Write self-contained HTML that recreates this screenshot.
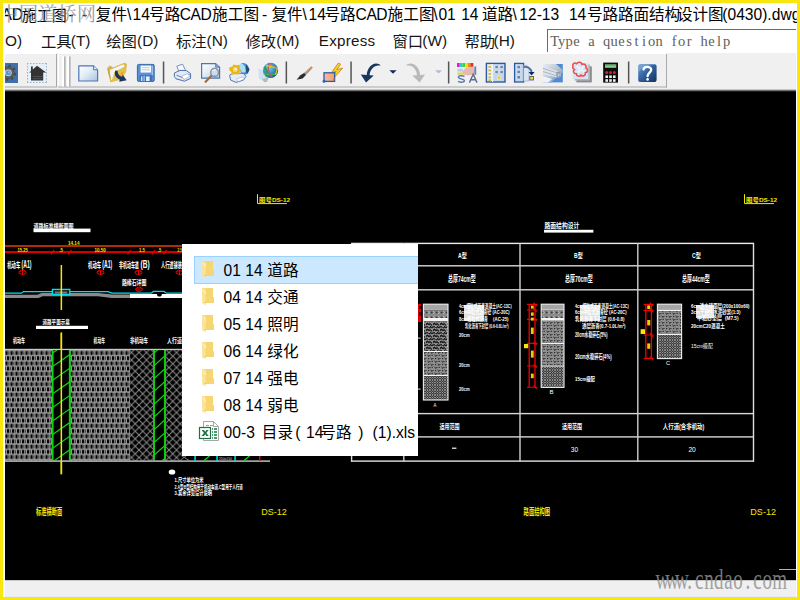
<!DOCTYPE html>
<html><head><meta charset="utf-8"><title>CAD</title>
<style>
html,body{margin:0;padding:0}
body{width:800px;height:600px;overflow:hidden;position:relative;background:#F8E60E;font-family:"Liberation Sans","Noto Sans CJK SC",sans-serif;}
.abs{position:absolute}
.t{position:absolute;white-space:pre;font-size:15.6px;line-height:20px;height:20px;color:#000}
svg{position:absolute;overflow:visible}
svg text{font-family:"Liberation Sans","Noto Sans CJK SC",sans-serif;}
</style></head><body>

<div class="abs" style="left:3px;top:3px;width:794px;height:594px;background:#fff;"></div>
<div class="abs" style="left:5px;top:3px;width:792px;height:26px;overflow:hidden;background:#fff">
<span class="t" style="left:-3.6px;top:1.59px;font-size:15.6px;color:#000;">AD</span>
<span class="t" style="left:16.8px;top:2.6px;font-size:15px;color:#000;">施工图</span>
<span class="t" style="left:63.5px;top:1.59px;font-size:15.6px;color:#000;">-</span>
<span class="t" style="left:77px;top:1.59px;font-size:15.6px;color:#000;">-</span>
<span class="t" style="left:90.8px;top:2.4px;font-size:15.6px;color:#000;">复件</span>
<span class="t" style="left:122px;top:1.59px;font-size:15.6px;color:#000;">\</span>
<span class="t" style="left:127.6px;top:1.59px;font-size:15.6px;color:#000;">14</span>
<span class="t" style="left:144.1px;top:2.4px;font-size:15.6px;color:#000;">号路</span>
<span class="t" style="left:174.8px;top:1.59px;font-size:15.6px;color:#000;letter-spacing:-0.45px">CAD</span>
<span class="t" style="left:207px;top:2.4px;font-size:15.6px;color:#000;letter-spacing:0.2px">施工图</span>
<span class="t" style="left:256.9px;top:1.59px;font-size:15.6px;color:#000;">-</span>
<span class="t" style="left:266.4px;top:2.4px;font-size:15.6px;color:#000;">复件</span>
<span class="t" style="left:297.6px;top:1.59px;font-size:15.6px;color:#000;">\</span>
<span class="t" style="left:303.5px;top:1.59px;font-size:15.6px;color:#000;">14</span>
<span class="t" style="left:319.5px;top:2.4px;font-size:15.6px;color:#000;">号路</span>
<span class="t" style="left:350.6px;top:1.59px;font-size:15.6px;color:#000;letter-spacing:-0.45px">CAD</span>
<span class="t" style="left:382.5px;top:2.4px;font-size:15.6px;color:#000;letter-spacing:0.1px">施工图</span>
<span class="t" style="left:428.2px;top:1.59px;font-size:15.6px;color:#000;">\</span>
<span class="t" style="left:433.4px;top:1.59px;font-size:15.6px;color:#000;">01</span>
<span class="t" style="left:456.2px;top:1.59px;font-size:15.6px;color:#000;">14</span>
<span class="t" style="left:477px;top:2.4px;font-size:15.6px;color:#000;">道路</span>
<span class="t" style="left:507.4px;top:1.59px;font-size:15.6px;color:#000;">\</span>
<span class="t" style="left:514.3px;top:1.59px;font-size:15.6px;color:#000;">12-13</span>
<span class="t" style="left:563.9px;top:1.59px;font-size:15.6px;color:#000;">14</span>
<span class="t" style="left:582px;top:2.4px;font-size:15.6px;color:#000;letter-spacing:-0.1px">号路路面结构</span>
<span class="t" style="left:671.9px;top:2.4px;font-size:15.6px;color:#000;">设计图</span>
<span class="t" style="left:717.3px;top:1.59px;font-size:15.6px;color:#000;">(0430).dwg</span>
<span class="t" style="left:-5.5px;top:1.8px;font-size:19px;letter-spacing:0.4px;color:#8c8c8c;opacity:0.85;font-family:'Liberation Serif','Noto Serif CJK SC',serif;">中国道桥网</span>
</div>
<div class="abs" style="left:3px;top:29px;width:794px;height:24px;background:#fff;"></div>
<div class="abs" style="left:5px;top:29px;width:540px;height:24px;overflow:hidden"><div class="abs" style="left:-5px;top:-29px">
<span class="t" style="left:-0.2px;top:30.66px;font-size:15.4px;color:#151515;">(O)</span>
<span class="t" style="left:41px;top:31.5px;font-size:15.3px;color:#151515;">工具</span>
<span class="t" style="left:70.8px;top:30.66px;font-size:15.4px;color:#151515;">(T)</span>
<span class="t" style="left:106.3px;top:31.5px;font-size:15.3px;color:#151515;">绘图</span>
<span class="t" style="left:137px;top:30.66px;font-size:15.4px;color:#151515;">(D)</span>
<span class="t" style="left:175.9px;top:31.5px;font-size:15.3px;color:#151515;">标注</span>
<span class="t" style="left:206.6px;top:30.66px;font-size:15.4px;color:#151515;">(N)</span>
<span class="t" style="left:245.5px;top:31.5px;font-size:15.3px;color:#151515;">修改</span>
<span class="t" style="left:276.3px;top:30.66px;font-size:15.4px;color:#151515;">(M)</span>
<span class="t" style="left:318.8px;top:30.73px;font-size:15.2px;color:#151515;letter-spacing:0.25px">Express</span>
<span class="t" style="left:392.5px;top:31.5px;font-size:15.3px;color:#151515;">窗口</span>
<span class="t" style="left:422.3px;top:30.66px;font-size:15.4px;color:#151515;">(W)</span>
<span class="t" style="left:464.5px;top:31.5px;font-size:15.3px;color:#151515;">帮助</span>
<span class="t" style="left:493.5px;top:30.66px;font-size:15.4px;color:#151515;">(H)</span>
</div></div>
<div class="abs" style="left:547px;top:29px;width:250px;height:23px;box-sizing:border-box;background:#fff;border-top:1px solid #6b6b6b;border-left:1px solid #6b6b6b"></div>
<div class="abs" style="left:550.3px;top:31px;height:20px;line-height:20px;white-space:nowrap;font-family:'Liberation Serif',serif;font-size:14.5px;color:#606060"><span style="display:inline-block;width:7.5px;text-align:center">T</span><span style="display:inline-block;width:7.5px;text-align:center">y</span><span style="display:inline-block;width:7.5px;text-align:center">p</span><span style="display:inline-block;width:7.5px;text-align:center">e</span><span style="display:inline-block;width:7.5px;text-align:center">&nbsp;</span><span style="display:inline-block;width:7.5px;text-align:center">a</span><span style="display:inline-block;width:7.5px;text-align:center">&nbsp;</span><span style="display:inline-block;width:7.5px;text-align:center">q</span><span style="display:inline-block;width:7.5px;text-align:center">u</span><span style="display:inline-block;width:7.5px;text-align:center">e</span><span style="display:inline-block;width:7.5px;text-align:center">s</span><span style="display:inline-block;width:7.5px;text-align:center">t</span><span style="display:inline-block;width:7.5px;text-align:center">i</span><span style="display:inline-block;width:7.5px;text-align:center">o</span><span style="display:inline-block;width:7.5px;text-align:center">n</span><span style="display:inline-block;width:7.5px;text-align:center">&nbsp;</span><span style="display:inline-block;width:7.5px;text-align:center">f</span><span style="display:inline-block;width:7.5px;text-align:center">o</span><span style="display:inline-block;width:7.5px;text-align:center">r</span><span style="display:inline-block;width:7.5px;text-align:center">&nbsp;</span><span style="display:inline-block;width:7.5px;text-align:center">h</span><span style="display:inline-block;width:7.5px;text-align:center">e</span><span style="display:inline-block;width:7.5px;text-align:center">l</span><span style="display:inline-block;width:7.5px;text-align:center">p</span></div>
<div class="abs" style="left:5px;top:53px;width:791px;height:35px;background:#f0f0f0;"></div>
<svg style="left:5px;top:52px" width="791" height="39" viewBox="5 52 791 39">
<defs>
<linearGradient id="gdoc" x1="0" y1="0" x2="1" y2="1"><stop offset="0" stop-color="#ffffff"/><stop offset="0.45" stop-color="#e4edf6"/><stop offset="1" stop-color="#a9c2de"/></linearGradient>
<linearGradient id="ghelp" x1="0" y1="0" x2="1" y2="1"><stop offset="0" stop-color="#6b9bd1"/><stop offset="0.5" stop-color="#2f5f9c"/><stop offset="1" stop-color="#14335f"/></linearGradient>
<linearGradient id="gblk" x1="0" y1="0" x2="1" y2="0"><stop offset="0" stop-color="#f7b6b6"/><stop offset="1" stop-color="#f3a35a"/></linearGradient>
<radialGradient id="gglobe" cx="0.4" cy="0.35" r="0.7"><stop offset="0" stop-color="#7fd0f0"/><stop offset="0.6" stop-color="#2a8ab8"/><stop offset="1" stop-color="#1a5a7a"/></radialGradient>
<linearGradient id="gpal" x1="0" y1="0" x2="1" y2="1"><stop offset="0" stop-color="#e8eef4"/><stop offset="0.5" stop-color="#b8c4d0"/><stop offset="1" stop-color="#4a86d0"/></linearGradient>
</defs>
<path d="M5,53.5 H56" stroke="#fff" stroke-width="1"/>
<path d="M56.5,54 V87" stroke="#a8a8a8" stroke-width="1"/>
<path d="M5,87 H57" stroke="#a8a8a8" stroke-width="1"/>
<path d="M58.5,54 V87 M58,53.5 H666" stroke="#fff" stroke-width="1"/>
<path d="M666.5,54 V87.5" stroke="#a8a8a8" stroke-width="1"/>
<path d="M58,87 H667" stroke="#a8a8a8" stroke-width="1"/>
<rect x="62" y="56.5" width="2" height="30" fill="#fff"/><rect x="64" y="56.5" width="1.6" height="30" fill="#b4b4b4"/>
<rect x="67" y="56.5" width="2" height="30" fill="#fff"/><rect x="69" y="56.5" width="1.6" height="30" fill="#b4b4b4"/>
<rect x="162.8" y="61.5" width="1.5" height="22" fill="#555"/>
<rect x="285.6" y="61.5" width="1.5" height="22" fill="#555"/>
<rect x="350.3" y="61.5" width="1.5" height="22" fill="#555"/>
<rect x="447.90000000000003" y="61.5" width="1.5" height="22" fill="#555"/>
<rect x="627.9" y="61.5" width="1.5" height="22" fill="#555"/>
<rect x="5" y="63" width="13" height="20" fill="#3f70aa"/>
<g transform="translate(8.3,72.8)">
<polygon points="8.18,0.63 7.79,2.55 5.35,2.71 4.55,3.91 5.34,6.22 3.71,7.31 1.87,5.70 0.46,5.98 -0.63,8.18 -2.55,7.79 -2.71,5.35 -3.91,4.55 -6.22,5.34 -7.31,3.71 -5.70,1.87 -5.98,0.46 -8.18,-0.63 -7.79,-2.55 -5.35,-2.71 -4.55,-3.91 -5.34,-6.22 -3.71,-7.31 -1.87,-5.70 -0.46,-5.98 0.63,-8.18 2.55,-7.79 2.71,-5.35 3.91,-4.55 6.22,-5.34 7.31,-3.71 5.70,-1.87 5.98,-0.46" fill="#4a4a4a"/>
<circle r="5.8" fill="#5a5a5a"/><circle r="3.4" fill="#cfd8e4"/><circle r="2.6" fill="#5b94d6"/><circle cx="0.6" cy="-0.4" r="0.8" fill="#9cc4f0"/>
</g>
<rect x="27" y="63" width="20" height="20" fill="#e6eef6"/>
<path d="M27.5,63 V83 M46.5,63 V83 M27,63.5 H47 M27,82.5 H47" stroke="#9fb4c8" stroke-width="1" stroke-dasharray="1.5,1.5"/>
<path d="M31,66.6 H32.8 V69.6 L37,65.8 L46.2,72.6 H43.2 V80.4 H31 V72.6 H29.2 L31,70.9 Z" fill="#333"/>
<path d="M33,76.5 H42.5 M33,78.6 H42.5" stroke="#555" stroke-width="0.8"/>
<path d="M78.8,65.8 H93.6 L97.6,69.8 V81 H78.8 Z" fill="url(#gdoc)" stroke="#4a78b4" stroke-width="1.2" stroke-linejoin="round"/>
<path d="M93.6,65.8 V69.8 H97.6" fill="#dfe9f4" stroke="#4a78b4" stroke-width="1"/>
<path d="M107.2,68 L110,65.6 L113,67.5 L124.5,62.8 L126.8,64 L126,72 L121,79.5 L110.5,82.2 L108.8,75 Z" fill="#d9b441"/>
<path d="M109.6,70 L123.5,64.2 L124.8,66 L118,77 L111,80.5 Z" fill="#f2f5fa"/>
<path d="M111.5,81.5 L114.5,72 L125.2,66.2 L126.4,70.5 L121.5,79.3 Z" fill="#e3c04c"/>
<path d="M107.2,68 L109.4,70.5 L111.2,82 L108.8,75 Z" fill="#c9a534"/>
<path d="M121.5,71.8 L123.6,72.6 L122.3,76 L120.3,75 Z" fill="#f5a01e"/>
<path d="M115.4,70.6 C113.8,74.6 115.6,78 119.8,79.6 L119.2,81.8 L126.6,80.2 L122.8,74.8 L122,76.8 C119.4,76 117.6,74 117.6,70.8 Z" fill="#1d3557"/>
<rect x="137.4" y="64.4" width="16.8" height="17" rx="1.2" fill="#5b8fd3" stroke="#3568ac" stroke-width="1"/>
<rect x="140.6" y="65.6" width="10.4" height="7" fill="#f4f7fb"/>
<path d="M142,67.6 H149.6 M142,69.8 H149.6" stroke="#b4c4d8" stroke-width="0.8"/>
<rect x="151.6" y="66" width="1.2" height="9" fill="#a8cdf4"/>
<rect x="139.6" y="75.2" width="12.6" height="6" fill="#3d72b8"/>
<rect x="141" y="76.4" width="1.4" height="4.6" fill="#cfe2f7"/><rect x="143.2" y="75.8" width="1.8" height="5.4" fill="#78b4f4"/><rect x="146" y="76.4" width="3.6" height="4.6" fill="#e8eef6"/>
<path d="M176.8,66.2 L182.6,64.2 L185.6,70.5 L179.4,72.8 Z" fill="#f6f8fb" stroke="#6a86b4" stroke-width="0.9"/>
<path d="M174.4,73 L180,70.4 L186.4,70.6 L190.6,73.6 L190.6,78.4 L184.6,81.2 L176,78.8 L174.4,76.6 Z" fill="#e4eaf3" stroke="#4f74ac" stroke-width="1"/>
<path d="M176.5,75.2 L182.6,77.6 L189.6,74.4" fill="none" stroke="#4f74ac" stroke-width="0.9"/>
<path d="M181.6,76.2 L188,73.4 L189.6,76.6 L184,79.6 Z" fill="#fff" stroke="#8aa0c4" stroke-width="0.6"/>
<path d="M201.6,63.6 H215.6 L219.6,67.2 V78.2 H201.6 Z" fill="url(#gdoc)" stroke="#4a78b4" stroke-width="1.2"/>
<path d="M215.6,63.6 V67.2 H219.6" fill="#7ea6d6" stroke="#4a78b4" stroke-width="0.8"/>
<path d="M211.6,75.6 L205.6,81.8" stroke="#b5652a" stroke-width="2.2" stroke-linecap="round"/>
<circle cx="214.6" cy="72.4" r="3.9" fill="#c6dcf2" stroke="#8c8c94" stroke-width="1.4"/>
<path d="M212.4,71.2 A2.6,2.6 0 0 1 216,70" stroke="#fff" stroke-width="1" fill="none"/>
<ellipse cx="244.2" cy="68.8" rx="4.6" ry="6" transform="rotate(-25 244.2 68.8)" fill="#3f8fd0"/>
<ellipse cx="242.6" cy="68.2" rx="2.8" ry="4.6" transform="rotate(-25 242.6 68.2)" fill="#a8e0f8"/>
<path d="M246.5,64.2 L249.6,69.5 L247,74 L245.6,69 Z" fill="#2a4a78"/>
<path d="M229.6,75.2 L234,72.6 L243.6,73.6 L246,76.4 L243.6,80 L236,82.4 L230.6,80 Z" fill="#e6ecf5" stroke="#5878ac" stroke-width="1"/>
<path d="M236.2,79.2 L243,76.6 L244.4,79 L238.2,81.6 Z" fill="#fff" stroke="#8aa0c4" stroke-width="0.5"/>
<path d="M229.2,67.4 L232.4,66.6 L233.6,64.4 L236.6,65.2 L239.4,64.8 L239.6,68.2 L241,70.4 L238.8,72.6 L238.2,74.6 L235,74.2 L232,74.8 L231.4,72 L229.4,70.4 Z" fill="#e8b61c"/>
<circle cx="235.2" cy="69.6" r="2.3" fill="#f7e27a"/><circle cx="236" cy="68.8" r="0.9" fill="#fff"/>
<path d="M258.2,68.6 L264,70.4 L269,80 L264.6,82 L259,78.6 Z" fill="#cfe0f2"/>
<path d="M262,79 L268.6,77.6 L267,81.8 L264.4,82.2 Z" fill="#b4b8c0"/>
<circle cx="270.6" cy="70.4" r="7.6" fill="url(#gglobe)"/>
<path d="M264,67 C267,69.5 268,73.5 266.6,77" stroke="#2e9a5a" stroke-width="2" fill="none"/>
<path d="M263.6,73.4 C268,75.4 274,75.4 277.8,72.4" stroke="#4ab04a" stroke-width="1.3" fill="none"/>
<path d="M269.2,63 C267.4,68 268.6,74 272.4,77.6" stroke="#c8506a" stroke-width="1.2" fill="none"/>
<path d="M266,65.4 L277.4,68.2 L275.6,74.8" stroke="#e8c832" stroke-width="1.1" fill="none"/>
<path d="M270,64.5 L277,68" stroke="#e07a3a" stroke-width="1" fill="none"/>
<path d="M296.6,79.8 L300.4,75.2 L304.4,72.8 L306,75 L302.6,78.4 Z" fill="#2b2b2b"/>
<path d="M304.2,72.8 L306.8,70.4 L308.4,72.4 L306,75 Z" fill="#9a9a9a"/>
<path d="M306.8,70.2 L311.2,66.2 L312.8,67.4 L308.4,72.4 Z" fill="#c9803e"/>
<path d="M307.6,70.6 L311.8,66.8" stroke="#e8c090" stroke-width="0.7"/>
<path d="M338.4,63 L340.6,64.2 L336.8,69.6 L342.6,68.2 L334.2,77.6 L332.6,76.6 L336.2,71.4 L331.4,72.6 Z" fill="#f2d41c" stroke="#c9862a" stroke-width="0.9" stroke-linejoin="round"/>
<rect x="324" y="72.8" width="10.6" height="8.6" fill="url(#gblk)" stroke="#2c5ba4" stroke-width="1.3"/>
<circle cx="324" cy="81.2" r="1.5" fill="#1e66c8"/><circle cx="334.2" cy="79.4" r="0.9" fill="#e8482a"/>
<path d="M380.6,65.4 C378,62.4 372,62.6 368.6,68.6 C367.4,70.8 366.8,73 366.8,75 L360.8,74.6 L366,82.4 L373.8,75.4 L369.6,75.2 C369.8,70.6 373.4,66.2 377.6,65.6 C379,65.4 380,65.8 380.6,65.4 Z" fill="#17375e"/>
<path d="M389.4,70.2 H396.6 L393,73.8 Z" fill="#14285a"/>
<path d="M406.2,65.4 C408.8,62.4 414.8,62.6 418.2,68.6 C419.4,70.8 420,73 420,75 L425,74.6 L419.6,82.4 L412.4,75.4 L417,75.2 C416.8,70.6 413.4,66.2 409.2,65.6 C407.8,65.4 406.8,65.8 406.2,65.4 Z" fill="#b9b9b9"/>
<path d="M435.2,70.2 H442 L438.6,73.6 Z" fill="#9fb0c8" opacity="0.8"/>
<rect x="457.0" y="63" width="2.8" height="4" fill="#e818c8"/>
<rect x="459.7" y="63" width="2.8" height="4" fill="#28c8e8"/>
<rect x="462.4" y="63" width="2.8" height="4" fill="#38d838"/>
<rect x="465.1" y="63" width="2.8" height="4" fill="#f0e020"/>
<rect x="467.8" y="63" width="2.8" height="4" fill="#f08820"/>
<rect x="470.5" y="63" width="2.8" height="4" fill="#e82828"/>
<path d="M462,72 L466,67.4 L472.6,66.6 L475.6,69.6 L474,74.6 L467.6,75.4 L463,74.2 Z" fill="#e6b9ad"/>
<rect x="457.4" y="68.6" width="5.6" height="3" fill="#b7cde8"/><rect x="457.4" y="72.4" width="6" height="2.4" fill="#e2d26a"/>
<rect x="474.4" y="66.4" width="1.8" height="8.4" fill="#5b86c2"/>
<path d="M464.6,76.4 C462,75.2 458.2,75.6 458.4,77.4 C458.6,79.2 464.4,78.6 464.4,80.6 C464.4,82.6 460,82.6 458,81.4" fill="none" stroke="#5f80b2" stroke-width="1.5"/>
<path d="M469.4,82.6 L473.2,74.2 L477,82.6 M470.8,79.8 H475.6" fill="none" stroke="#5b6f8c" stroke-width="1.4"/>
<rect x="486.4" y="63.4" width="18.6" height="18.6" fill="#c4d6ec" stroke="#2c5aa0" stroke-width="1.4"/>
<rect x="487.4" y="64.4" width="4.6" height="16.6" fill="#e8eef7"/>
<path d="M492.6,64 V82" stroke="#f4f7fb" stroke-width="1"/>
<rect x="488.4" y="66" width="2.6" height="1.8" fill="#d6b93a"/>
<rect x="488.4" y="69.5" width="2.6" height="1.8" fill="#d6b93a"/>
<rect x="488.4" y="73" width="2.6" height="1.8" fill="#d6b93a"/>
<rect x="488.4" y="76.5" width="2.6" height="1.8" fill="#d6b93a"/>
<rect x="488.4" y="79.4" width="2.6" height="1.8" fill="#d6b93a"/>
<rect x="495" y="65.4" width="3.2" height="3.2" fill="#6c86aa" stroke="#e6eef8" stroke-width="0.6"/>
<rect x="500" y="65.4" width="3.2" height="3.2" fill="#6c86aa" stroke="#e6eef8" stroke-width="0.6"/>
<rect x="495" y="70.4" width="3.2" height="3.2" fill="#6c86aa" stroke="#e6eef8" stroke-width="0.6"/>
<rect x="500" y="70.4" width="3.2" height="3.2" fill="#6c86aa" stroke="#e6eef8" stroke-width="0.6"/>
<rect x="497.6" y="76" width="3.2" height="3.2" fill="#e8c83a" stroke="#e6eef8" stroke-width="0.6"/>
<rect x="514.6" y="63.4" width="9" height="18.6" fill="#c4d6ec" stroke="#2c5aa0" stroke-width="1.3"/>
<rect x="517" y="65.4" width="3.4" height="3.4" fill="#6c86aa" stroke="#e6eef8" stroke-width="0.6"/>
<rect x="517" y="70.2" width="3.4" height="3.4" fill="#6c86aa" stroke="#e6eef8" stroke-width="0.6"/>
<rect x="517" y="75.6" width="3.4" height="3.4" fill="#6c86aa" stroke="#e6eef8" stroke-width="0.6"/>
<path d="M523.6,65.4 L527,65.4 L529,68 L529,81 L523.6,81 Z" fill="#dbe5f2" stroke="#8aa4c8" stroke-width="0.6"/>
<path d="M523.6,67 C528.4,66.4 531.4,69 531.6,72.4" fill="none" stroke="#4a6c9c" stroke-width="1.8"/>
<path d="M528.6,72 H534.6 L531.6,75.6 Z" fill="#14285a"/>
<rect x="529.8" y="76.4" width="3.6" height="3.6" fill="#f0d838" stroke="#3a4a78" stroke-width="0.8"/>
<rect x="543" y="64" width="19.8" height="18.4" fill="#4f8ad4"/>
<path d="M543,64 H556 L562.8,70 V72 L551,82.4 H543 Z" fill="url(#gpal)"/>
<path d="M543,66.4 L558.8,71.4 C561.6,72.6 561.6,77.2 558.4,77.6 L543,74.6 Z" fill="#dfe5ec"/>
<path d="M543,68.4 L557.6,73 M543,71.6 L556,75.6" stroke="#aab4c0" stroke-width="1"/>
<ellipse cx="558.4" cy="74.6" rx="2.2" ry="3" fill="#8e9aa8"/><ellipse cx="558.6" cy="74.8" rx="1" ry="1.6" fill="#c8d0da"/>
<path d="M543,76 L552,79 L548,82.4 H543 Z" fill="#eef2f6"/>
<rect x="576.4" y="66.4" width="15.4" height="16" fill="#8a8a8a"/>
<rect x="574.6" y="64.6" width="15.4" height="16" fill="#aeb6c0"/>
<rect x="572.8" y="63" width="15.4" height="16" fill="#d6e4f2"/>
<path d="M573,66 C572,63.6 574.6,62 576.6,63.6 C578,61.6 581.6,62 582,64.4 C584.6,63.4 587,65.4 585.8,67.8 C588.4,69 588,72.4 585.4,72.8 C586,75.6 582.6,77 581,75 C579.6,77 576.4,76.4 576.4,73.8 C573.6,74 572.4,71 574.4,69.4 C572.6,68.6 572.4,67 573,66 Z" fill="none" stroke="#f04848" stroke-width="1.5"/>
<path d="M576.4,66 L584,72 M584,66.4 L577.4,72.6" stroke="#e8f0f8" stroke-width="2.6"/>
<rect x="603.2" y="62.6" width="14.8" height="20" fill="#0c0c0c"/>
<rect x="605" y="64.2" width="11.2" height="3.6" fill="#8fc892"/><rect x="605" y="64.2" width="11.2" height="1.2" fill="#4f8a52"/>
<circle cx="606.6999999999999" cy="72.4" r="1.5" fill="#e02020"/>
<rect x="605.4" y="75.4" width="2.6" height="2.6" fill="#f2f2f2"/>
<rect x="605.4" y="79.2" width="2.6" height="2.6" fill="#f2f2f2"/>
<circle cx="610.5" cy="72.4" r="1.5" fill="#e02020"/>
<rect x="609.2" y="75.4" width="2.6" height="2.6" fill="#f2f2f2"/>
<rect x="609.2" y="79.2" width="2.6" height="2.6" fill="#f2f2f2"/>
<circle cx="614.3" cy="72.4" r="1.5" fill="#e02020"/>
<rect x="613" y="75.4" width="2.6" height="2.6" fill="#f2f2f2"/>
<rect x="613" y="79.2" width="2.6" height="2.6" fill="#f2f2f2"/>
<rect x="638.2" y="64" width="18.4" height="18" rx="2.6" fill="url(#ghelp)"/>
<path d="M638.6,72 C644,66 650,64.6 656.4,65 L656.4,66.6 C656.4,64.8 655.4,64 654,64 H640.8 C639.2,64 638.2,65 638.2,66.6 Z" fill="#8fb4e0" opacity="0.55"/>
<path d="M643.6,69.6 C643.6,66.2 651.2,65.8 651.2,69.8 C651.2,72.4 647.6,73 647.6,76.2" fill="none" stroke="#fff" stroke-width="2.3" stroke-linecap="round"/>
<circle cx="647.6" cy="79.4" r="1.3" fill="#fff"/>
</svg>
<div class="abs" style="left:5px;top:88px;width:791px;height:1px;background:#f0f0f0;"></div>
<div class="abs" style="left:5px;top:89px;width:791px;height:1px;background:#c4c4c4;"></div>
<div class="abs" style="left:5px;top:90px;width:791px;height:1px;background:#6e6e6e;"></div>
<div class="abs" style="left:5px;top:91px;width:791px;height:1px;background:#1e1e1e;"></div>
<div class="abs" style="left:5px;top:580px;width:792px;height:17px;background:#f0f0f0;"></div>
<div class="abs" style="left:5px;top:579px;width:791px;height:1px;background:#161616;"></div>
<div class="abs" style="left:5px;top:580px;width:791px;height:1px;background:#c8c8c8;"></div>
<div class="abs" style="left:5px;top:596px;width:792px;height:1px;background:#e9ecf8;"></div>
<div class="abs" style="left:5px;top:92px;width:791px;height:488px;background:#000;"></div>
<svg style="left:5px;top:91px" width="791" height="489" viewBox="5 91 791 489">
<defs>
<pattern id="brick" x="5" y="350.4" width="5" height="10.4" patternUnits="userSpaceOnUse">
<rect width="5" height="10.4" fill="#969696"/>
<rect x="0.5" y="0.7" width="2.1" height="3.8" fill="#040404"/><rect x="3.3" y="0.9" width="1.1" height="3.4" fill="#3c3c3c"/>
<rect x="2.0" y="5.9" width="2.1" height="3.8" fill="#040404"/><rect x="4.8" y="6.1" width="1.1" height="3.4" fill="#3c3c3c"/><rect x="-0.2" y="6.1" width="1.1" height="3.4" fill="#3c3c3c"/>
</pattern>
<pattern id="xh" x="131.5" y="352.5" width="7.5" height="7.5" patternUnits="userSpaceOnUse">
<rect width="7.5" height="7.5" fill="#000"/>
<path d="M-1,-1 L8.5,8.5 M8.5,-1 L-1,8.5" stroke="#8a8a8a" stroke-width="1"/>
</pattern>
<pattern id="dense" width="2.5" height="2.5" patternUnits="userSpaceOnUse">
<rect width="2.5" height="2.5" fill="#111"/>
<path d="M0,0 L2.5,2.5 M2.5,0 L0,2.5" stroke="#b4b4b4" stroke-width="0.7"/>
</pattern>
<pattern id="speck" width="7" height="6" patternUnits="userSpaceOnUse">
<rect width="7" height="6" fill="#8e8e8e"/>
<path d="M0.5,1 L2,2.4 L3.4,1 M3.6,4 L5,5.4 L6.4,4" stroke="#181818" stroke-width="1" fill="none"/>
<rect x="4.6" y="0.8" width="1.2" height="1.2" fill="#2a2a2a"/><rect x="1" y="4" width="1.2" height="1.2" fill="#2a2a2a"/>
</pattern>
<pattern id="speckd" width="7" height="6" patternUnits="userSpaceOnUse">
<rect width="7" height="6" fill="#161616"/>
<path d="M0.3,0.8 L2,2.6 L3.6,0.8 M3.4,3.8 L5,5.6 L6.8,3.8 M5,0.4 L6.6,2.2 M0.4,3.6 L1.8,5.2" stroke="#a4a4a4" stroke-width="1.25" fill="none"/>
<rect x="4.2" y="1.6" width="1.3" height="1.3" fill="#8a8a8a"/><rect x="2.2" y="4.2" width="1.3" height="1.3" fill="#8a8a8a"/>
</pattern>
<pattern id="dots" width="5" height="5" patternUnits="userSpaceOnUse">
<rect width="5" height="5" fill="#8a8a8a"/>
<circle cx="1.6" cy="2.5" r="1.1" fill="#3a3a3a"/><path d="M3,1 L4.6,2.5 L3,4" stroke="#ccc" stroke-width="0.6" fill="none"/>
</pattern>
</defs>
<path d="M257.5,194.2 V203.6 H287" stroke="#f6e600" stroke-width="1" fill="none"/>
<text transform="translate(259.0,201.5) scale(1.099,1)" font-size="6" font-weight="bold" fill="#f6e600" textLength="28.4" lengthAdjust="spacingAndGlyphs">图号DS-12</text>
<path d="M744.5,194.2 V203.6 H774" stroke="#f6e600" stroke-width="1" fill="none"/>
<text transform="translate(746.0,201.5) scale(1.099,1)" font-size="6" font-weight="bold" fill="#f6e600" textLength="28.4" lengthAdjust="spacingAndGlyphs">图号DS-12</text>
<text transform="translate(33.5,227.8) scale(0.871,1)" font-size="5.8" font-weight="bold" fill="#fff" textLength="46" lengthAdjust="spacingAndGlyphs">道路标准横断面图</text>
<rect x="33.5" y="228.6" width="57" height="3.6" fill="#fff"/>
<rect x="5" y="245" width="177" height="2" fill="#b02c06"/>
<rect x="5" y="251.2" width="177" height="1.7" fill="#f40000"/>
<text transform="translate(68.0,245.0) scale(0.832,1)" font-size="5.7" font-weight="bold" fill="#f6e600" textLength="13.8" lengthAdjust="spacingAndGlyphs">14.14</text>
<text transform="translate(17.5,252.4) scale(0.753,1)" font-size="5.7" font-weight="bold" fill="#f6e600" textLength="13.6" lengthAdjust="spacingAndGlyphs">15.25</text>
<text transform="translate(59.4,252.4) scale(0.817,1)" font-size="5.7" font-weight="bold" fill="#f6e600" textLength="4.4" lengthAdjust="spacingAndGlyphs">.5</text>
<text transform="translate(94.4,252.4) scale(0.832,1)" font-size="5.7" font-weight="bold" fill="#f6e600" textLength="13.7" lengthAdjust="spacingAndGlyphs">10.50</text>
<text transform="translate(139.0,252.4) scale(0.774,1)" font-size="5.7" font-weight="bold" fill="#f6e600" textLength="7.5" lengthAdjust="spacingAndGlyphs">1.5</text>
<text transform="translate(158.0,252.4) scale(0.731,1)" font-size="5.7" font-weight="bold" fill="#f6e600" textLength="4.4" lengthAdjust="spacingAndGlyphs">.5</text>
<text transform="translate(177.6,252.4) scale(0.568,1)" font-size="5.7" font-weight="bold" fill="#f6e600" textLength="7.5" lengthAdjust="spacingAndGlyphs">2.5</text>
<path d="M50.9,254.4 L54.1,250" stroke="#f40000" stroke-width="1.2"/>
<path d="M68.2,254.4 L71.39999999999999,250" stroke="#f40000" stroke-width="1.2"/>
<path d="M127.4,254.4 L130.6,250" stroke="#f40000" stroke-width="1.2"/>
<path d="M151.9,254.4 L155.1,250" stroke="#f40000" stroke-width="1.2"/>
<path d="M163.4,254.4 L166.6,250" stroke="#f40000" stroke-width="1.2"/>
<text transform="translate(7.2,267.7) scale(0.565,1)" font-size="7.8" font-weight="bold" fill="#fff" textLength="23.3" lengthAdjust="spacingAndGlyphs">机动车</text>
<text transform="translate(21.0,268.3) scale(0.585,1)" x="0.9" font-size="10" font-weight="bold" fill="#fff" textLength="17" lengthAdjust="spacingAndGlyphs">(A1)</text>
<text transform="translate(88.0,267.7) scale(0.565,1)" font-size="7.8" font-weight="bold" fill="#fff" textLength="23.3" lengthAdjust="spacingAndGlyphs">机动车</text>
<text transform="translate(101.8,268.3) scale(0.585,1)" x="0.9" font-size="10" font-weight="bold" fill="#fff" textLength="17" lengthAdjust="spacingAndGlyphs">(A1)</text>
<text transform="translate(119.0,267.7) scale(0.506,1)" font-size="7.8" font-weight="bold" fill="#fff" textLength="39.2" lengthAdjust="spacingAndGlyphs">非机动车道</text>
<text transform="translate(139.8,268.3) scale(0.777,1)" x="0.9" font-size="10" font-weight="bold" fill="#fff" textLength="11.8" lengthAdjust="spacingAndGlyphs">(B)</text>
<text transform="translate(161.0,268.1) scale(0.516,1)" font-size="8.1" font-weight="bold" fill="#fff" textLength="40.4" lengthAdjust="spacingAndGlyphs">人行道铺装</text>
<path d="M18.7,272.4 L21.5,270.2 M18.7,272.4 L21.5,274.59999999999997 M26.3,272.4 L23.5,270.2 M26.3,272.4 L23.5,274.59999999999997 M22.5,269.79999999999995 V275.0" stroke="#f00000" stroke-width="1.15" fill="none"/>
<path d="M96.7,272.4 L99.5,270.2 M96.7,272.4 L99.5,274.59999999999997 M104.3,272.4 L101.5,270.2 M104.3,272.4 L101.5,274.59999999999997 M100.5,269.79999999999995 V275.0" stroke="#f00000" stroke-width="1.15" fill="none"/>
<path d="M134.7,272.4 L137.5,270.2 M134.7,272.4 L137.5,274.59999999999997 M142.3,272.4 L139.5,270.2 M142.3,272.4 L139.5,274.59999999999997 M138.5,269.79999999999995 V275.0" stroke="#f00000" stroke-width="1.15" fill="none"/>
<path d="M175.7,272.4 L178.5,270.2 M175.7,272.4 L178.5,274.59999999999997 M183.3,272.4 L180.5,270.2 M183.3,272.4 L180.5,274.59999999999997 M179.5,269.79999999999995 V275.0" stroke="#f00000" stroke-width="1.15" fill="none"/>
<text transform="translate(122.0,284.7) scale(0.688,1)" font-size="7.1" font-weight="bold" fill="#fff" textLength="35.4" lengthAdjust="spacingAndGlyphs">路缘石详图</text>
<path d="M135.2,289.4 L138,287.2 M135.2,289.4 L138,291.59999999999997 M142.8,289.4 L140,287.2 M142.8,289.4 L140,291.59999999999997 M139,286.79999999999995 V292.0" stroke="#f00000" stroke-width="1.15" fill="none"/>
<path d="M5,296.4 H38 L42,294.6 H98 L112,296.2 H130" stroke="#8a8a8a" stroke-width="3.4" fill="none"/>
<rect x="130" y="294" width="52" height="4" fill="#fff"/>
<path d="M157,294 A2.4,2.6 0 0 0 161.8,294 Z" fill="#000"/>
<path d="M5,293.2 H21.5 L23.5,291.6 H52 M70,291.6 H98 M98,291.6 H108 L112,293.2 H151 L153.5,291.4 H164 L166.5,293.2 H182" stroke="#00dff2" stroke-width="1.3" fill="none"/>
<rect x="52.4" y="289.4" width="17.4" height="5" fill="#222" stroke="#00dff2" stroke-width="1.3"/>
<rect x="55" y="291.6" width="12" height="2" fill="#7a7a7a"/>
<rect x="60.6" y="265" width="1.5" height="45" fill="#f6e600"/>
<rect x="60.6" y="332.6" width="1.5" height="141.6" fill="#f6e600"/>
<text transform="translate(42.5,324.3) scale(0.761,1)" font-size="6" font-weight="bold" fill="#fff" textLength="35.9" lengthAdjust="spacingAndGlyphs">道路平面示意</text>
<rect x="36" y="325.8" width="52" height="3.2" fill="#fff"/>
<text transform="translate(13.0,343.1) scale(0.635,1)" font-size="6.4" font-weight="bold" fill="#fff" textLength="19.2" lengthAdjust="spacingAndGlyphs">机动车</text>
<text transform="translate(93.6,343.1) scale(0.594,1)" font-size="6.4" font-weight="bold" fill="#fff" textLength="19.2" lengthAdjust="spacingAndGlyphs">机动车</text>
<text transform="translate(130.0,343.1) scale(0.706,1)" font-size="6.4" font-weight="bold" fill="#fff" textLength="25.7" lengthAdjust="spacingAndGlyphs">非机动车</text>
<text transform="translate(167.0,343.1) scale(0.768,1)" font-size="6.4" font-weight="bold" fill="#fff" textLength="19.3" lengthAdjust="spacingAndGlyphs">人行道</text>
<rect x="5" y="350" width="125" height="110.6" fill="url(#brick)"/>
<rect x="130" y="350" width="52" height="110.6" fill="url(#xh)"/>
<rect x="52.6" y="350" width="17.199999999999996" height="110.60000000000002" fill="#000"/><clipPath id="gc52"><rect x="52.6" y="350" width="17.199999999999996" height="110.60000000000002"/></clipPath><g clip-path="url(#gc52)" stroke="#0cd60c" stroke-width="1.2"><path d="M52.6,353.0 L69.8,341.0"/><path d="M52.6,366.6 L69.8,354.6"/><path d="M52.6,380.2 L69.8,368.2"/><path d="M52.6,393.8 L69.8,381.8"/><path d="M52.6,407.4 L69.8,395.4"/><path d="M52.6,421.0 L69.8,409.0"/><path d="M52.6,434.6 L69.8,422.6"/><path d="M52.6,448.2 L69.8,436.2"/><path d="M52.6,461.8 L69.8,449.8"/><path d="M52.6,475.4 L69.8,463.4"/></g><path d="M52.6,350 V460.6 M69.8,350 V460.6" stroke="#0cd60c" stroke-width="1.9"/>
<rect x="154" y="350" width="11" height="110.60000000000002" fill="#000"/><clipPath id="gc154"><rect x="154" y="350" width="11" height="110.60000000000002"/></clipPath><g clip-path="url(#gc154)" stroke="#0cd60c" stroke-width="1.2"><path d="M154,353.0 L165,343.0"/><path d="M154,365.8 L165,355.8"/><path d="M154,378.6 L165,368.6"/><path d="M154,391.4 L165,381.4"/><path d="M154,404.2 L165,394.2"/><path d="M154,417.0 L165,407.0"/><path d="M154,429.8 L165,419.8"/><path d="M154,442.6 L165,432.6"/><path d="M154,455.4 L165,445.4"/><path d="M154,468.2 L165,458.2"/></g><path d="M154,350 V460.6 M165,350 V460.6" stroke="#0cd60c" stroke-width="1.9"/>
<rect x="60.6" y="332.6" width="1.5" height="141.6" fill="#f6e600"/>
<rect x="5" y="348.8" width="177" height="1.3" fill="#c8c8c8"/>
<rect x="5" y="460.4" width="265" height="1.4" fill="#c8c8c8"/>
<rect x="194.3" y="456" width="1.5" height="5" fill="#00dff2"/>
<rect x="216.3" y="456" width="1.5" height="5" fill="#00dff2"/>
<rect x="234.3" y="456" width="1.5" height="5" fill="#00dff2"/>
<path d="M204,460.5 L209.5,456 M244,460.5 L249.5,456" stroke="#0cd60c" stroke-width="1.2"/>
<rect x="259" y="456" width="1.4" height="5" fill="#f40000"/>
<text transform="translate(219.0,460.2) scale(0.913,1)" font-size="3.9" fill="#ddd" textLength="14.1" lengthAdjust="spacingAndGlyphs">250x150</text>
<path d="M182,456 L190,461 M186,456 L182,459" stroke="#8a8a8a" stroke-width="0.9"/>
<ellipse cx="172" cy="472" rx="3.3" ry="2.6" fill="#fff"/>
<text transform="translate(174.6,481.9) scale(0.702,1)" font-size="6" font-weight="bold" fill="#fff" textLength="41.1" lengthAdjust="spacingAndGlyphs">1.尺寸单位为米</text>
<text transform="translate(174.6,488.5) scale(0.595,1)" font-size="6" font-weight="bold" fill="#fff" textLength="114.7" lengthAdjust="spacingAndGlyphs">2.A型B型结构用于机动车道,C型用于人行道</text>
<text transform="translate(174.6,495.1) scale(0.704,1)" font-size="6" font-weight="bold" fill="#fff" textLength="53" lengthAdjust="spacingAndGlyphs">3.其余详见设计说明</text>
<text transform="translate(36.0,514.5) scale(0.568,1)" font-size="9.2" font-weight="bold" fill="#f6e600" textLength="46" lengthAdjust="spacingAndGlyphs">标准横断面</text>
<text transform="translate(544.5,228.3) scale(0.896,1)" font-size="6.5" font-weight="bold" fill="#fff" textLength="38.8" lengthAdjust="spacingAndGlyphs">路面结构设计</text>
<rect x="544" y="229.8" width="49.4" height="2.8" fill="#fff"/>
<rect x="351" y="242.7" width="403" height="1.4" fill="#ececec"/>
<rect x="351" y="265.1" width="403" height="1.4" fill="#d6d6d6"/>
<rect x="351" y="289.1" width="403" height="1.4" fill="#d6d6d6"/>
<rect x="351" y="412.9" width="403" height="1.4" fill="#d6d6d6"/>
<rect x="351" y="436.2" width="403" height="1.4" fill="#d6d6d6"/>
<rect x="351" y="460.4" width="403" height="1.4" fill="#e0e0e0"/>
<rect x="350.9" y="243" width="1.4" height="218.6" fill="#dcdcdc"/>
<rect x="403.1" y="243" width="1.4" height="218.6" fill="#d0d0d0"/>
<rect x="519.3" y="243" width="1.4" height="218.6" fill="#d0d0d0"/>
<rect x="637.1" y="243" width="1.4" height="218.6" fill="#d0d0d0"/>
<rect x="752.8" y="243" width="1.4" height="218.6" fill="#e0e0e0"/>
<text transform="translate(458.0,258.1) scale(0.729,1)" font-size="7" font-weight="bold" fill="#fff" textLength="12" lengthAdjust="spacingAndGlyphs">A型</text>
<text transform="translate(574.0,258.1) scale(0.708,1)" font-size="7" font-weight="bold" fill="#fff" textLength="12.3" lengthAdjust="spacingAndGlyphs">B型</text>
<text transform="translate(692.0,258.1) scale(0.716,1)" font-size="7" font-weight="bold" fill="#fff" textLength="12.2" lengthAdjust="spacingAndGlyphs">C型</text>
<text transform="translate(448.0,282.1) scale(0.571,1)" font-size="8.9" font-weight="bold" fill="#fff" textLength="48.6" lengthAdjust="spacingAndGlyphs">总厚74cm型</text>
<text transform="translate(565.0,282.1) scale(0.571,1)" font-size="8.9" font-weight="bold" fill="#fff" textLength="48.6" lengthAdjust="spacingAndGlyphs">总厚70cm型</text>
<text transform="translate(682.0,282.1) scale(0.571,1)" font-size="8.9" font-weight="bold" fill="#fff" textLength="48.6" lengthAdjust="spacingAndGlyphs">总厚44cm型</text>
<text transform="translate(439.4,428.7) scale(0.714,1)" font-size="7.1" font-weight="bold" fill="#fff" textLength="28.3" lengthAdjust="spacingAndGlyphs">适用范围</text>
<text transform="translate(562.0,428.7) scale(0.707,1)" font-size="7.1" font-weight="bold" fill="#fff" textLength="28.3" lengthAdjust="spacingAndGlyphs">适用范围</text>
<text transform="translate(662.8,428.7) scale(0.759,1)" font-size="7.2" font-weight="bold" fill="#fff" textLength="54.7" lengthAdjust="spacingAndGlyphs">人行道(含非机动)</text>
<rect x="452" y="447.6" width="4.4" height="1.2" fill="#fff"/>
<text transform="translate(570.8,451.5) scale(0.981,1)" font-size="7.3" fill="#fff" textLength="7.4" lengthAdjust="spacingAndGlyphs">30</text>
<text transform="translate(688.4,451.5) scale(1.007,1)" font-size="7.3" fill="#fff" textLength="7.4" lengthAdjust="spacingAndGlyphs">20</text>
<rect x="423.4" y="304.2" width="24.600000000000023" height="5.2" fill="#a6a6a6"/><rect x="423.4" y="309.4" width="24.600000000000023" height="0.8" fill="#f4f4f4"/><rect x="423.4" y="310.2" width="24.600000000000023" height="7.8" fill="url(#dots)"/><rect x="423.4" y="318" width="24.600000000000023" height="3.6" fill="#f4f4f4"/><rect x="423.4" y="321.6" width="24.600000000000023" height="29.4" fill="url(#speckd)"/><rect x="423.4" y="351" width="24.600000000000023" height="1.0" fill="#f4f4f4"/><rect x="423.4" y="352" width="24.600000000000023" height="23.0" fill="url(#speck)"/><rect x="423.4" y="375" width="24.600000000000023" height="1.2" fill="#f4f4f4"/><rect x="423.4" y="376.2" width="24.600000000000023" height="23.8" fill="url(#dense)"/><rect x="423.4" y="304.2" width="24.600000000000023" height="95.8" fill="none" stroke="#f0f0f0" stroke-width="1.1"/>
<rect x="418" y="304" width="3" height="18" fill="#f40000" opacity="0.9"/><rect x="419" y="306" width="1.6" height="3" fill="#000"/><rect x="419" y="312" width="1.6" height="4" fill="#000"/>
<rect x="418" y="337.6" width="2.6" height="1" fill="#ddd"/><rect x="418" y="388.6" width="2.6" height="1" fill="#ddd"/>
<text transform="translate(459.0,307.8) scale(0.678,1)" font-size="5.6" font-weight="bold" fill="#fff" textLength="77.7" lengthAdjust="spacingAndGlyphs">4cm细粒式沥青混凝土(AC-13C)</text>
<text transform="translate(459.0,314.4) scale(0.747,1)" font-size="5.6" font-weight="bold" fill="#fff" textLength="67.8" lengthAdjust="spacingAndGlyphs">6cm中粒式沥青砼 (AC-20C)</text>
<text transform="translate(459.0,321.0) scale(0.873,1)" font-size="5.6" font-weight="bold" fill="#fff" textLength="33.1" lengthAdjust="spacingAndGlyphs">8cm粗粒式沥青</text>
<text transform="translate(459.0,321.0) scale(0.873,1)" x="39" font-size="5.6" font-weight="bold" fill="#fff" textLength="17.8" lengthAdjust="spacingAndGlyphs">(AC-25)</text>
<text transform="translate(465.0,327.6) scale(0.608,1)" font-size="5.6" font-weight="bold" fill="#fff" textLength="71.8" lengthAdjust="spacingAndGlyphs">乳化沥青下封层 (0.6-0.8L/m²)</text>
<rect x="464" y="305" width="20" height="16" fill="#fff" opacity="0.88"/>
<text transform="translate(459.0,337.0) scale(0.844,1)" font-size="5.3" font-weight="bold" fill="#fff" textLength="12.6" lengthAdjust="spacingAndGlyphs">20cm</text>
<text transform="translate(459.0,366.6) scale(0.844,1)" font-size="5.3" font-weight="bold" fill="#fff" textLength="12.6" lengthAdjust="spacingAndGlyphs">20cm</text>
<text transform="translate(459.0,391.4) scale(0.844,1)" font-size="5.3" font-weight="bold" fill="#fff" textLength="12.6" lengthAdjust="spacingAndGlyphs">20cm</text>
<text transform="translate(433.4,407.4) scale(1.010,1)" font-size="5" fill="#fff" textLength="2.9" lengthAdjust="spacingAndGlyphs">A</text>
<rect x="541.2" y="304.2" width="22.799999999999955" height="5.0" fill="#a6a6a6"/><rect x="541.2" y="309.2" width="22.799999999999955" height="0.8" fill="#f4f4f4"/><rect x="541.2" y="310" width="22.799999999999955" height="8.0" fill="url(#dots)"/><rect x="541.2" y="318" width="22.799999999999955" height="2.8" fill="#f4f4f4"/><rect x="541.2" y="320.8" width="22.799999999999955" height="22.2" fill="url(#speck)"/><rect x="541.2" y="343" width="22.799999999999955" height="1.2" fill="#f4f4f4"/><rect x="541.2" y="344.2" width="22.799999999999955" height="21.2" fill="url(#speck)"/><rect x="541.2" y="365.4" width="22.799999999999955" height="1.4" fill="#f4f4f4"/><rect x="541.2" y="366.8" width="22.799999999999955" height="20.6" fill="url(#dense)"/><rect x="541.2" y="304.2" width="22.799999999999955" height="83.2" fill="none" stroke="#f0f0f0" stroke-width="1.1"/>
<path d="M529.2,304 V387.6 M535,304 V387.6" stroke="#f40000" stroke-width="1.3"/>
<path d="M527,304.4 H537.4 M533.6,302.59999999999997 L536.6,306.2" stroke="#f40000" stroke-width="1.1"/>
<path d="M527,310 H537.4 M533.6,308.2 L536.6,311.8" stroke="#f40000" stroke-width="1.1"/>
<path d="M527,319.4 H537.4 M533.6,317.59999999999997 L536.6,321.2" stroke="#f40000" stroke-width="1.1"/>
<path d="M527,343.4 H537.4 M533.6,341.59999999999997 L536.6,345.2" stroke="#f40000" stroke-width="1.1"/>
<path d="M527,366 H537.4 M533.6,364.2 L536.6,367.8" stroke="#f40000" stroke-width="1.1"/>
<path d="M527,387.2 H537.4 M533.6,385.4 L536.6,389.0" stroke="#f40000" stroke-width="1.1"/>
<rect x="530.9" y="305.6" width="2.8" height="3" fill="#f6e600" opacity="0.92"/>
<rect x="530.9" y="312.4" width="2.8" height="3.4" fill="#f6e600" opacity="0.92"/>
<rect x="530.9" y="317.6" width="2.8" height="3" fill="#f6e600" opacity="0.92"/>
<rect x="530.9" y="327.6" width="2.8" height="6.4" fill="#f6e600" opacity="0.92"/>
<rect x="530.9" y="350.6" width="2.8" height="7" fill="#f6e600" opacity="0.92"/>
<rect x="530.9" y="373.6" width="2.8" height="4.6" fill="#f6e600" opacity="0.92"/>
<rect x="524" y="344" width="4.2" height="4.2" fill="#f6e600"/>
<text transform="translate(575.0,307.8) scale(0.691,1)" font-size="5.6" font-weight="bold" fill="#fff" textLength="77.7" lengthAdjust="spacingAndGlyphs">4cm细粒式沥青混凝土(AC-13C)</text>
<text transform="translate(575.0,314.4) scale(0.762,1)" font-size="5.6" font-weight="bold" fill="#fff" textLength="67.8" lengthAdjust="spacingAndGlyphs">6cm中粒式沥青砼 (AC-20C)</text>
<text transform="translate(575.0,321.0) scale(0.813,1)" font-size="5.6" font-weight="bold" fill="#fff" textLength="61" lengthAdjust="spacingAndGlyphs">乳化沥青下封层 (0.6-0.8)</text>
<text transform="translate(582.0,327.6) scale(0.810,1)" font-size="5.6" font-weight="bold" fill="#fff" textLength="53.8" lengthAdjust="spacingAndGlyphs">透层沥青(0.7-1.0L/m²)</text>
<rect x="580" y="305" width="20" height="16" fill="#fff" opacity="0.88"/>
<text transform="translate(575.0,336.5) scale(0.604,1)" font-size="6.3" font-weight="bold" fill="#fff" textLength="54" lengthAdjust="spacingAndGlyphs">20cm水稳碎石(5%)</text>
<text transform="translate(575.0,358.9) scale(0.653,1)" font-size="6.5" font-weight="bold" fill="#fff" textLength="56" lengthAdjust="spacingAndGlyphs">20cm水稳碎石(4%)</text>
<text transform="translate(575.0,380.5) scale(0.701,1)" font-size="6.2" font-weight="bold" fill="#fff" textLength="28.3" lengthAdjust="spacingAndGlyphs">15cm级配</text>
<text transform="translate(549.6,394.2) scale(1.516,1)" font-size="4.5" fill="#fff" textLength="2.7" lengthAdjust="spacingAndGlyphs">B</text>
<rect x="657.4" y="304.2" width="24.200000000000045" height="5.2" fill="#a6a6a6"/><rect x="657.4" y="309.4" width="24.200000000000045" height="1.8" fill="#f4f4f4"/><rect x="657.4" y="311.2" width="24.200000000000045" height="22.8" fill="url(#speck)"/><rect x="657.4" y="334" width="24.200000000000045" height="1.2" fill="#f4f4f4"/><rect x="657.4" y="335.2" width="24.200000000000045" height="23.4" fill="url(#dense)"/><rect x="657.4" y="304.2" width="24.200000000000045" height="54.4" fill="none" stroke="#f0f0f0" stroke-width="1.1"/>
<path d="M645.8,304 V358.8 M651.4,304 V358.8" stroke="#f40000" stroke-width="1.3"/>
<path d="M643.6,304.4 H653.8 M650,302.59999999999997 L653,306.2" stroke="#f40000" stroke-width="1.1"/>
<path d="M643.6,310.4 H653.8 M650,308.59999999999997 L653,312.2" stroke="#f40000" stroke-width="1.1"/>
<path d="M643.6,335 H653.8 M650,333.2 L653,336.8" stroke="#f40000" stroke-width="1.1"/>
<path d="M643.6,358.4 H653.8 M650,356.59999999999997 L653,360.2" stroke="#f40000" stroke-width="1.1"/>
<rect x="647.2" y="305.4" width="3" height="3.6" fill="#f6e600" opacity="0.92"/>
<rect x="647.2" y="320" width="3" height="5.4" fill="#f6e600" opacity="0.92"/>
<rect x="647.2" y="343.4" width="3" height="5.4" fill="#f6e600" opacity="0.92"/>
<rect x="640.6" y="329.2" width="4.4" height="4.8" fill="#f6e600"/>
<text transform="translate(691.0,308.0) scale(0.807,1)" font-size="5.6" font-weight="bold" fill="#fff" textLength="72.6" lengthAdjust="spacingAndGlyphs">6cm透水砖面层(200x100x60)</text>
<text transform="translate(691.0,314.2) scale(0.810,1)" font-size="5.6" font-weight="bold" fill="#fff" textLength="61.2" lengthAdjust="spacingAndGlyphs">3cm干硬性水泥砂浆(1:3)</text>
<text transform="translate(697.0,319.8) scale(0.904,1)" font-size="5.6" font-weight="bold" fill="#fff" textLength="27.6" lengthAdjust="spacingAndGlyphs">中粗砂垫层</text>
<text transform="translate(697.0,319.8) scale(0.904,1)" x="30.9" font-size="5.6" font-weight="bold" fill="#fff" textLength="15" lengthAdjust="spacingAndGlyphs">(M7.5)</text>
<rect x="696" y="305" width="18" height="13" fill="#fff" opacity="0.85"/>
<text transform="translate(691.0,327.9) scale(0.771,1)" font-size="6" font-weight="bold" fill="#fff" textLength="43.8" lengthAdjust="spacingAndGlyphs">20cmC20混凝土</text>
<text transform="translate(691.0,348.4) scale(0.905,1)" font-size="5.4" fill="#fff" textLength="24.1" lengthAdjust="spacingAndGlyphs">15cm级配</text>
<text transform="translate(666.0,364.8) scale(1.289,1)" font-size="5.6" fill="#fff" textLength="3.2" lengthAdjust="spacingAndGlyphs">C</text>
<text transform="translate(260.2,514.5) scale(0.966,1)" x="1" font-size="9.8" fill="#f6e600" textLength="26.5" lengthAdjust="spacingAndGlyphs">DS-12</text>
<text transform="translate(523.6,514.7) scale(0.580,1)" font-size="9.1" font-weight="bold" fill="#f6e600" textLength="45.7" lengthAdjust="spacingAndGlyphs">路面结构图</text>
<text transform="translate(749.4,514.5) scale(0.966,1)" x="1" font-size="9.8" fill="#f6e600" textLength="26.5" lengthAdjust="spacingAndGlyphs">DS-12</text>
</svg>
<div class="abs" style="left:182px;top:243.5px;width:236px;height:212.5px;background:#fff;"></div>
<div class="abs" style="left:194px;top:256px;width:224px;height:28px;box-sizing:border-box;background:#cce8ff;border:1px solid #99d1ff;border-right:none"></div>
<svg style="left:202px;top:260.5px" width="13" height="18" viewBox="0 0 13 18"><path d="M0.2,0 H11 V9.2 H12 V15 H3.5 Z" fill="#F5D672"/><path d="M0,0 L3.6,0.4 V17.2 L0.2,15.6 Z" fill="#FBE394"/><path d="M0.8,2 L3.2,3.8 V6" stroke="#FFF7D2" stroke-width="0.9" fill="none"/><rect x="2.8" y="14" width="1" height="1" fill="#F9A94A"/></svg>
<span class="t" style="left:223.6px;top:260.59px;font-size:15.6px;color:#000;">01 14 </span>
<span class="t" style="left:267.3px;top:261.4px;font-size:15.6px;color:#000;">道路</span>
<svg style="left:202px;top:287.5px" width="13" height="18" viewBox="0 0 13 18"><path d="M0.2,0 H11 V9.2 H12 V15 H3.5 Z" fill="#F5D672"/><path d="M0,0 L3.6,0.4 V17.2 L0.2,15.6 Z" fill="#FBE394"/><path d="M0.8,2 L3.2,3.8 V6" stroke="#FFF7D2" stroke-width="0.9" fill="none"/><rect x="2.8" y="14" width="1" height="1" fill="#F9A94A"/></svg>
<span class="t" style="left:223.6px;top:287.59px;font-size:15.6px;color:#000;">04 14 </span>
<span class="t" style="left:267.3px;top:288.4px;font-size:15.6px;color:#000;">交通</span>
<svg style="left:202px;top:314.5px" width="13" height="18" viewBox="0 0 13 18"><path d="M0.2,0 H11 V9.2 H12 V15 H3.5 Z" fill="#F5D672"/><path d="M0,0 L3.6,0.4 V17.2 L0.2,15.6 Z" fill="#FBE394"/><path d="M0.8,2 L3.2,3.8 V6" stroke="#FFF7D2" stroke-width="0.9" fill="none"/><rect x="2.8" y="14" width="1" height="1" fill="#F9A94A"/></svg>
<span class="t" style="left:223.6px;top:314.59px;font-size:15.6px;color:#000;">05 14 </span>
<span class="t" style="left:267.3px;top:315.4px;font-size:15.6px;color:#000;">照明</span>
<svg style="left:202px;top:341.5px" width="13" height="18" viewBox="0 0 13 18"><path d="M0.2,0 H11 V9.2 H12 V15 H3.5 Z" fill="#F5D672"/><path d="M0,0 L3.6,0.4 V17.2 L0.2,15.6 Z" fill="#FBE394"/><path d="M0.8,2 L3.2,3.8 V6" stroke="#FFF7D2" stroke-width="0.9" fill="none"/><rect x="2.8" y="14" width="1" height="1" fill="#F9A94A"/></svg>
<span class="t" style="left:223.6px;top:341.59px;font-size:15.6px;color:#000;">06 14 </span>
<span class="t" style="left:267.3px;top:342.4px;font-size:15.6px;color:#000;">绿化</span>
<svg style="left:202px;top:368.5px" width="13" height="18" viewBox="0 0 13 18"><path d="M0.2,0 H11 V9.2 H12 V15 H3.5 Z" fill="#F5D672"/><path d="M0,0 L3.6,0.4 V17.2 L0.2,15.6 Z" fill="#FBE394"/><path d="M0.8,2 L3.2,3.8 V6" stroke="#FFF7D2" stroke-width="0.9" fill="none"/><rect x="2.8" y="14" width="1" height="1" fill="#F9A94A"/></svg>
<span class="t" style="left:223.6px;top:368.59px;font-size:15.6px;color:#000;">07 14 </span>
<span class="t" style="left:267.3px;top:369.4px;font-size:15.6px;color:#000;">强电</span>
<svg style="left:202px;top:395.5px" width="13" height="18" viewBox="0 0 13 18"><path d="M0.2,0 H11 V9.2 H12 V15 H3.5 Z" fill="#F5D672"/><path d="M0,0 L3.6,0.4 V17.2 L0.2,15.6 Z" fill="#FBE394"/><path d="M0.8,2 L3.2,3.8 V6" stroke="#FFF7D2" stroke-width="0.9" fill="none"/><rect x="2.8" y="14" width="1" height="1" fill="#F9A94A"/></svg>
<span class="t" style="left:223.6px;top:395.59px;font-size:15.6px;color:#000;">08 14 </span>
<span class="t" style="left:267.3px;top:396.4px;font-size:15.6px;color:#000;">弱电</span>
<span class="t" style="left:223.6px;top:422.59px;font-size:15.6px;color:#000;">00-3</span>
<span class="t" style="left:261.8px;top:423.4px;font-size:15.6px;color:#000;">目录</span>
<span class="t" style="left:295.2px;top:422.59px;font-size:15.6px;color:#000;">(</span>
<span class="t" style="left:306px;top:422.59px;font-size:15.6px;color:#000;">14</span>
<span class="t" style="left:320.3px;top:423.4px;font-size:15.6px;color:#000;">号路</span>
<span class="t" style="left:358.3px;top:422.59px;font-size:15.6px;color:#000;">)</span>
<span class="t" style="left:372.6px;top:422.59px;font-size:15.6px;color:#000;">(1).xls</span>
<svg style="left:198px;top:420px" width="22" height="22" viewBox="198 420 22 22"><path d="M203.5,421.5 H213.5 L218.5,426.5 V440.5 H203.5 Z" fill="#fff" stroke="#a6a6a6" stroke-width="1"/><path d="M213.5,421.5 V426.5 H218.5" fill="none" stroke="#a6a6a6" stroke-width="1"/><path d="M206,425.5 H209 M210,425.5 H213" stroke="#999" stroke-width="1"/><g fill="#4a9a6c"><rect x="212" y="428" width="1" height="2"/><rect x="214" y="428" width="3" height="2"/><rect x="212" y="431" width="1" height="2"/><rect x="214" y="431" width="3" height="2"/><rect x="212" y="434" width="1" height="2"/><rect x="214" y="434" width="3" height="2"/><rect x="212" y="437" width="1" height="2"/><rect x="214" y="437" width="3" height="2"/></g><rect x="199.5" y="427.5" width="11" height="11" fill="#fff" stroke="#1e7145" stroke-width="1.2"/><path d="M201.6,430 H204 L205.2,431.8 L206.4,430 H208.6 L206.3,433 L208.8,436 H206.4 L205.2,434.3 L204,436 H201.5 L204,433 Z" fill="#1e7145"/></svg>
<div class="abs" style="left:779px;top:568.6px;width:17px;height:1.2px;background:#b4b4b4;"></div>
<div class="abs" style="left:655.5px;top:570.6px;height:24px;line-height:24px;white-space:nowrap;font-family:'Liberation Serif',serif;font-size:19px;color:#909090;opacity:0.82;transform-origin:0 18.4px;transform:scaleY(1.6)"><span style="display:inline-block;width:9.72px;text-align:center">w</span><span style="display:inline-block;width:9.72px;text-align:center">w</span><span style="display:inline-block;width:9.72px;text-align:center">w</span><span style="display:inline-block;width:9.72px;text-align:center">.</span><span style="display:inline-block;width:9.72px;text-align:center">c</span><span style="display:inline-block;width:9.72px;text-align:center">n</span><span style="display:inline-block;width:9.72px;text-align:center">d</span><span style="display:inline-block;width:9.72px;text-align:center">a</span><span style="display:inline-block;width:9.72px;text-align:center">o</span><span style="display:inline-block;width:9.72px;text-align:center">.</span><span style="display:inline-block;width:9.72px;text-align:center">c</span><span style="display:inline-block;width:9.72px;text-align:center">o</span><span style="display:inline-block;width:9.72px;text-align:center">m</span></div>
<div class="abs" style="left:3px;top:52px;width:2px;height:545px;background:#fff;"></div>
<div class="abs" style="left:796px;top:29px;width:1px;height:568px;background:#fff;"></div>
<div class="abs" style="left:0px;top:0px;width:800px;height:3px;background:#F8E60E;"></div>
<div class="abs" style="left:0px;top:597px;width:800px;height:3px;background:#F8E60E;"></div>
<div class="abs" style="left:0px;top:0px;width:3px;height:600px;background:#F8E60E;"></div>
<div class="abs" style="left:797px;top:0px;width:3px;height:600px;background:#F8E60E;"></div>
</body></html>
